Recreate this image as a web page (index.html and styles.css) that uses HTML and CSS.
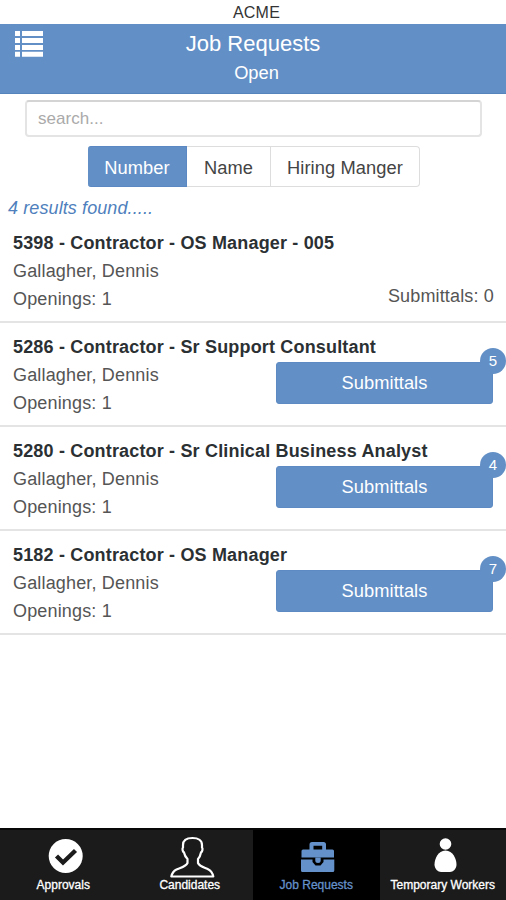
FILE: index.html
```html
<!DOCTYPE html>
<html lang="en">
<head>
<meta charset="utf-8">
<title>Job Requests</title>
<link rel="stylesheet" href="styles.css">
</head>
<body>
<div class="app">
  <div class="brand">ACME</div>
  <header class="header">
    <svg class="menu" width="30" height="28" viewBox="0 0 30 28" fill="#fff" aria-label="Menu">
      <path d="M1 1h5v5H1zM8 1h21v5H8zM1 8h5v5H1zM8 8h21v5H8zM1 15h5v5H1zM8 15h21v5H8zM1 21.8h5v5H1zM8 21.8h21v5H8z"/>
    </svg>
    <h1>Job Requests</h1>
    <h2>Open</h2>
  </header>
  <main class="main">
    <input class="search" type="text" placeholder="search..." aria-label="Search">
    <div class="segments">
      <button class="segment active">Number</button>
      <button class="segment name">Name</button>
      <button class="segment manager">Hiring Manger</button>
    </div>
    <p class="results">4 results found.....</p>
    <ul class="jobs">
      <li class="job">
        <h3>5398 - Contractor - OS Manager - 005</h3>
        <p>Gallagher, Dennis</p>
        <div class="openings"><p>Openings: 1</p><p class="count">Submittals: 0</p></div>
      </li>
      <li class="job">
        <h3>5286 - Contractor - Sr Support Consultant</h3>
        <div class="detail">
          <div><p>Gallagher, Dennis</p><p>Openings: 1</p></div>
          <button class="submittals">Submittals<span class="badge">5</span></button>
        </div>
      </li>
      <li class="job">
        <h3>5280 - Contractor - Sr Clinical Business Analyst</h3>
        <div class="detail">
          <div><p>Gallagher, Dennis</p><p>Openings: 1</p></div>
          <button class="submittals">Submittals<span class="badge">4</span></button>
        </div>
      </li>
      <li class="job">
        <h3>5182 - Contractor - OS Manager</h3>
        <div class="detail">
          <div><p>Gallagher, Dennis</p><p>Openings: 1</p></div>
          <button class="submittals">Submittals<span class="badge">7</span></button>
        </div>
      </li>
    </ul>
  </main>
  <nav class="tabs">
    <a class="tab">
      <svg width="48" height="40" viewBox="0 0 48 40">
        <circle cx="26.700" cy="20" r="17" fill="#fff"/>
        <path d="M17.500 20L24 26.500L36.500 14.500" fill="none" stroke="#1b1b1b" stroke-width="4.400"/>
      </svg>
      <span>Approvals</span>
    </a>
    <a class="tab">
      <svg width="48" height="40" viewBox="0 0 48 40" fill="none" stroke="#fff" stroke-width="2.200" stroke-linejoin="round">
        <path d="M26.500 2C20.500 2 17 4.500 17 9V11.500C16 12.500 16.500 15.500 18 16.500C18.500 19 19.500 21 21.500 23V27C20 30.500 15 31.500 10.500 33.500C7.500 35 6 37.500 5.300 40.500H47.300C46.600 37.500 45.500 35 42.500 33.500C38.500 31.500 33.500 30.500 32 27V23C34 21 34.500 19 35 16.500C36.500 15.500 37 12.500 36 11.500V9C36 4.500 32.500 2 26.500 2Z"/>
      </svg>
      <span>Candidates</span>
    </a>
    <a class="tab active">
      <svg width="48" height="40" viewBox="0 0 48 40" fill="#6591ca">
        <path fill-rule="evenodd" d="M9.500 15Q9.500 13.500 11 13.500H17.500V8.500Q17.500 6 20 6H31.500Q34 6 34 8.500V13.500H40.500Q42 13.500 42 15V21.500H9.500ZM21.500 9.800V13.500H30.200V9.800ZM9 23.500H20.500V26L23.500 29.500H28.500L31.500 26V23.500H42.300V34.500Q42.300 36 40.800 36H10.500Q9 36 9 34.500Z"/>
        <path d="M23.300 21.500H28.700V24.500Q28.700 27 26 27Q23.300 27 23.300 24.500Z"/>
      </svg>
      <span>Job Requests</span>
    </a>
    <a class="tab">
      <svg width="48" height="40" viewBox="0 0 48 40" fill="#fff">
        <circle cx="26.500" cy="8" r="5.800"/>
        <path d="M26.500 14.500C19 14.500 15.500 23 15.500 28.500C15.500 33 19 36 22 36H31C34 36 37.500 33 37.500 28.500C37.500 23 34 14.500 26.500 14.500Z"/>
      </svg>
      <span>Temporary Workers</span>
    </a>
  </nav>
</div>
</body>
</html>
```

FILE: styles.css
```css
* { box-sizing: border-box; }
body { margin: 0; background: #fff; color: #555; font-family: "Liberation Sans", Arial, sans-serif; }
h1, h2, h3, p, ul { margin: 0; padding: 0; font-weight: 400; }
button, input { font: inherit; }
.app { width: 506px; height: 900px; display: flex; flex-direction: column; overflow: hidden; }
.brand { height: 24px; padding-left: 7px; line-height: 25px; font-size: 16px; letter-spacing: .2px; text-align: center; color: #333; }
.header { position: relative; height: 70px; padding-top: 5px; background: #628fc6; color: #fff; text-align: center; border-bottom: 1px solid #5584bd; }
.header h1 { font-size: 22px; line-height: 29px; }
.header h2 { padding-left: 7px; font-size: 18.300px; line-height: 30px; }
.menu { position: absolute; left: 14px; top: 6px; }
.main { flex: 1; }
.search { display: block; width: 457px; height: 37px; margin: 6px 0 0 25px; padding: 0 11px; border: 2px solid #e4e4e4; border-top-color: #d4d4d4; border-radius: 4px; background: #fff; font-size: 17px; letter-spacing: .05px; outline: 0; }
.search::placeholder { color: #aaa; opacity: 1; }
.segments { display: flex; width: 332px; height: 41px; margin: 9px 0 0 88px; }
.segment { padding: 2px 0 0; border: 1px solid #ddd; border-left: 0; background: #fff; color: #444; font-size: 18.300px; letter-spacing: .1px; }
.segment.active { width: 99px; border-color: #5b88c2; border-radius: 3px 0 0 3px; background: #628fc6; color: #fff; }
.segment.name { width: 84px; }
.segment.manager { width: 149px; border-radius: 0 4px 4px 0; }
.results { height: 32px; padding: 6px 0 0 8px; line-height: 31px; font-size: 18px; font-style: italic; letter-spacing: .1px; color: #4f7fbd; }
.jobs { list-style: none; }
.job { height: 104px; padding: 10px 12px 8px 13px; border-bottom: 2px solid #e4e4e4; font-size: 18px; line-height: 28px; letter-spacing: .16px; }
.job h3 { font-size: 18px; line-height: 28px; font-weight: 700; letter-spacing: .17px; color: #2b3033; }
.openings, .detail { display: flex; justify-content: space-between; }
.count { margin-top: -3px; }
.submittals { position: relative; width: 217px; height: 42px; margin: 1px 1px 0 0; padding: 0; border: 1px solid #5d8ac3; border-radius: 3px; background: #628fc6; color: #fff; font-size: 18.300px; letter-spacing: .05px; }
.badge { position: absolute; right: -14px; top: -15px; width: 26px; height: 26px; border-radius: 50%; background: #628fc6; font-size: 15px; line-height: 26px; text-align: center; }
.tabs { display: flex; height: 72px; background: #1b1b1b; border-top: 2px solid #080808; }
.tab { width: 126.500px; padding-top: 6px; display: flex; flex-direction: column; align-items: center; color: #fff; font-size: 12px; line-height: 19px; white-space: nowrap; -webkit-text-stroke: .3px; }
.tab svg { display: block; overflow: visible; flex: none; }
.tab.active { background: #000; color: #6591ca; }
```
